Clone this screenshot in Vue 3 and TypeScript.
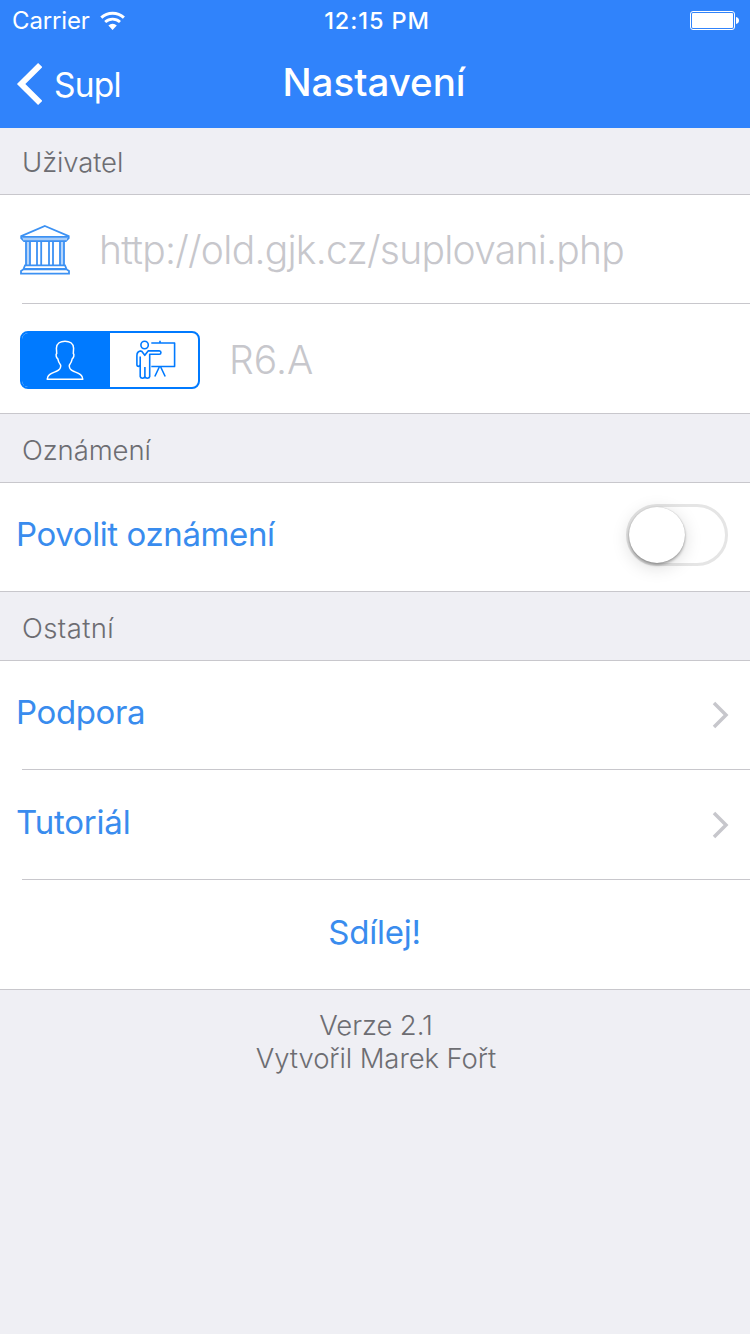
<script setup lang="ts">
import { ref } from 'vue'

interface LinkRow {
  key: string
  label: string
}

const role = ref<'student' | 'teacher'>('student')
const notifications = ref(false)
const links: LinkRow[] = [
  { key: 'podpora', label: 'Podpora' },
  { key: 'tutorial', label: 'Tutoriál' },
]
</script>

<template>
  <div class="screen">
    <header class="top">
      <div class="status">
        <div class="status-left">
          <span class="carrier">Carrier</span>
          <svg class="wifi" width="26" height="20" viewBox="0 0 26 20">
            <path d="M1.3 6.6A16.6 16.6 0 0 1 23.9 6.6" fill="none" stroke="#fff" stroke-width="3" />
            <path d="M5.2 11A10.8 10.8 0 0 1 20 11" fill="none" stroke="#fff" stroke-width="2.8" />
            <path d="M8.4 14.4A6.3 6.3 0 0 1 16.8 14.4L12.6 19Z" fill="#fff" />
          </svg>
        </div>
        <span class="clock">12:15 PM</span>
        <svg class="battery" width="50" height="20" viewBox="0 0 50 20">
          <rect x="0.5" y="1.5" width="44" height="18" rx="2.5" fill="none" stroke="#fff" />
          <rect x="2" y="3" width="41" height="15" rx="1" fill="#fff" />
          <path d="M46 7c2 .3 3 1.800 3 3.500s-1 3.200-3 3.500z" fill="#fff" />
        </svg>
      </div>
      <nav class="nav">
        <div class="back">
          <svg width="28" height="44" viewBox="0 0 28 44">
            <path d="M26.200 3L7.200 22L26.200 41" fill="none" stroke="#fff" stroke-width="6" />
          </svg>
          <span class="back-label">Supl</span>
        </div>
        <h1 class="title">Nastavení</h1>
        <span></span>
      </nav>
    </header>

    <h2 class="section first"><span class="s-user">Uživatel</span></h2>
    <div class="row">
      <svg class="bank" width="50" height="50" viewBox="0 0 50 50">
        <path d="M6 16H10V40H6ZM40 16H44V40H40Z" fill="#b5d5fb" />
        <g fill="none" stroke="#3c91f3" stroke-width="1.800">
          <path d="M24.900 1L48.700 11.100V13.200L45.800 16H4L1.200 13.200V11.100Z" fill="#fff" />
          <path d="M3 13.700H47" stroke="#a5ccfa" stroke-width="3" />
          <path d="M1.500 11.900H48.500" />
          <path d="M6 16V40.500M10 16V40.500M17 16V40.500M21.200 16V40.500M29 16V40.500M33 16V40.500M40 16V40.500M44 16V40.500" />
          <path d="M5 40.300H45L46.500 44H3.500ZM3.500 44.300H46.500L49 46V48.700H1V46Z" />
        </g>
      </svg>
      <span class="placeholder url">http://old.gjk.cz/suplovani.php</span>
    </div>
    <div class="row last">
      <div class="segmented">
        <button class="seg" :class="{ active: role === 'student' }" @click="role = 'student'">
          <svg class="person" width="40" height="42" viewBox="0 0 40 42">
            <path
              d="M20 2.200C24.500 2.200 28.500 4.500 28.600 9.200L28.300 14.500C29.500 15.200 28.800 18.700 27.300 19.700C26.800 22.500 25.600 24.600 24.300 26.200C23.900 29.800 25.300 31 28.500 32.300C33.800 34.500 37.500 35.500 37.800 40.200H2.200C2.500 35.500 6.200 34.500 11.500 32.300C14.700 31 16.100 29.800 15.700 26.200C14.400 24.600 13.200 22.500 12.700 19.700C11.200 18.700 10.500 15.200 11.700 14.500L11.400 9.200C11.500 4.500 15.500 2.200 20 2.200Z"
              fill="none" stroke="#fff" stroke-width="1.500" stroke-linejoin="round" />
          </svg>
        </button>
        <button class="seg" :class="{ active: role === 'teacher' }" @click="role = 'teacher'">
          <svg class="board" width="40" height="40" viewBox="0 0 40 40">
            <g fill="none" stroke="#007aff" stroke-width="1.600" stroke-linejoin="round">
              <circle cx="8.600" cy="5" r="3.700" />
              <path d="M15.300 3H39.200M38.600 3V26.500M15.300 26.500H39.200M24 3V.8" />
              <path d="M23.300 27L18.800 36.500M24.700 27L29.200 36.500" />
              <path
                d="M5.500 10.900L8.800 15.300L12.100 10.900H23.300C25.500 10.900 25.500 14.300 23.300 14.300H13.700V36.500C13.300 38.900 9.300 38.900 8.900 36.500C8.500 38.900 4.600 38.900 4.200 36.500V16.500M8.900 36.500V27M5.500 10.900C2.500 11 .9 12.600 .9 15.500V25C1.200 26.800 3.700 26.800 4 25" />
            </g>
          </svg>
        </button>
      </div>
      <span class="placeholder room">R6.A</span>
    </div>

    <h2 class="section"><span class="s-notify">Oznámení</span></h2>
    <div class="row last between">
      <span class="label allow">Povolit oznámení</span>
      <button class="switch" :class="{ on: notifications }" @click="notifications = !notifications">
        <span class="knob"></span>
      </button>
    </div>

    <h2 class="section"><span class="s-other">Ostatní</span></h2>
    <div v-for="link in links" :key="link.key" class="row between">
      <span class="label" :class="link.key">{{ link.label }}</span>
      <svg class="chevron" width="18" height="28" viewBox="0 0 18 28">
        <path d="M2 2L14 14L2 26" fill="none" stroke="#c7c7cc" stroke-width="3.500" />
      </svg>
    </div>
    <div class="row last center">
      <span class="label share">Sdílej!</span>
    </div>

    <footer class="about">
      <div class="version">Verze 2.1</div>
      <div class="author">Vytvořil Marek Fořt</div>
    </footer>
  </div>
</template>

<style>
body {
  background: #efeff4;
}
</style>

<style scoped>
.screen {
  width: 750px;
  height: 1334px;
  overflow: hidden;
  background: #efeff4;
  font-family: Inter, "Liberation Sans", sans-serif;
}
.screen * {
  box-sizing: border-box;
}
span, h1, .about div {
  white-space: nowrap;
}
button {
  padding: 0;
  border: 0;
  background: none;
}
.top {
  height: 128px;
  background: #3083fb;
  color: #fff;
}
.status {
  height: 40px;
  display: grid;
  grid-template-columns: 1fr auto 1fr;
  align-items: center;
  padding: 0 10px 0 12px;
  font-size: 24px;
  line-height: 30px;
}
.status-left {
  display: flex;
  align-items: center;
  gap: 10px;
}
.carrier {
  padding-top: 2px;
  letter-spacing: -0.15px;
}
.wifi {
  margin-top: 1px;
}
.clock {
  padding: 2px 0 0 2px;
  font-weight: 550;
  font-size: 23.500px;
  letter-spacing: 0.9px;
}
.battery {
  justify-self: end;
}
.nav {
  height: 88px;
  display: grid;
  grid-template-columns: 1fr auto 1fr;
}
.back {
  display: flex;
  align-items: center;
  padding-left: 14px;
  gap: 12px;
}
.back-label {
  padding-top: 1px;
  font-size: 33.500px;
  font-weight: 370;
  letter-spacing: -0.8px;
}
.title {
  margin: 0 2px 0 0;
  font-size: 38.500px;
  font-weight: 500;
  line-height: 84px;
  letter-spacing: 0;
}
.section {
  height: 69px;
  margin: 0;
  padding: 2px 0 0 22px;
  border-bottom: 1px solid #c8c7cc;
  font-size: 27.500px;
  font-weight: 310;
  line-height: 68px;
  letter-spacing: -0.1px;
  color: #6d6d72;
}
.s-other {
  letter-spacing: 0.4px;
}
.section.first {
  height: 67px;
  padding-top: 1px;
  line-height: 66px;
}
.row {
  height: 110px;
  display: flex;
  align-items: center;
  background: linear-gradient(#c8c7cc, #c8c7cc) 22px 100% / 100% 1px no-repeat #fff;
}
.first + .row,
.section:not(.first) + .row {
  height: 109px;
}
.row.last {
  background-position: 0 100%;
}
.between {
  justify-content: space-between;
}
.center {
  justify-content: center;
}
.bank {
  margin-left: 20px;
}
.placeholder {
  font-size: 39px;
  font-weight: 260;
  color: #c7c7cc;
  margin-left: 29px;
}
.url {
  letter-spacing: -0.73px;
}
.room {
  letter-spacing: 0;
}
.segmented {
  width: 180px;
  height: 58px;
  margin: 2px 0 0 20px;
  display: flex;
  border: 2px solid #007aff;
  border-radius: 8px;
  overflow: hidden;
}
.seg {
  width: 88px;
  display: flex;
  align-items: center;
  justify-content: center;
}
.seg.active {
  background: #007aff;
}
.person {
  margin-right: 2px;
}
.board {
  margin-left: 4px;
}
.label {
  margin-left: 16px;
  padding-bottom: 7px;
  font-size: 33px;
  font-weight: 390;
  letter-spacing: -0.4px;
  color: #398cee;
}
.tutorial {
  letter-spacing: -0.2px;
}
.switch {
  width: 102px;
  height: 62px;
  margin: -5px 22px 0 0;
  border: 3px solid #e5e5e5;
  border-radius: 31px;
  background: #fff;
}
.knob {
  display: block;
  width: 56px;
  height: 56px;
  border-radius: 50%;
  background: #fff;
  box-shadow: 0 0 1px rgba(0, 0, 0, 0.25), 0 2px 3px rgba(0, 0, 0, 0.3), 0 4px 18px rgba(0, 0, 0, 0.15);
}
.switch.on .knob {
  margin-left: auto;
}
.chevron {
  margin-right: 20px;
}
.podpora + .chevron {
  margin-bottom: 1px;
}
.share {
  margin: 0 1px 0 0;
  letter-spacing: -0.2px;
}
.about {
  padding: 19px 0 0 2px;
  text-align: center;
  font-size: 27.500px;
  font-weight: 310;
  line-height: 33px;
  letter-spacing: -0.1px;
  color: #6d6d72;
}
</style>
